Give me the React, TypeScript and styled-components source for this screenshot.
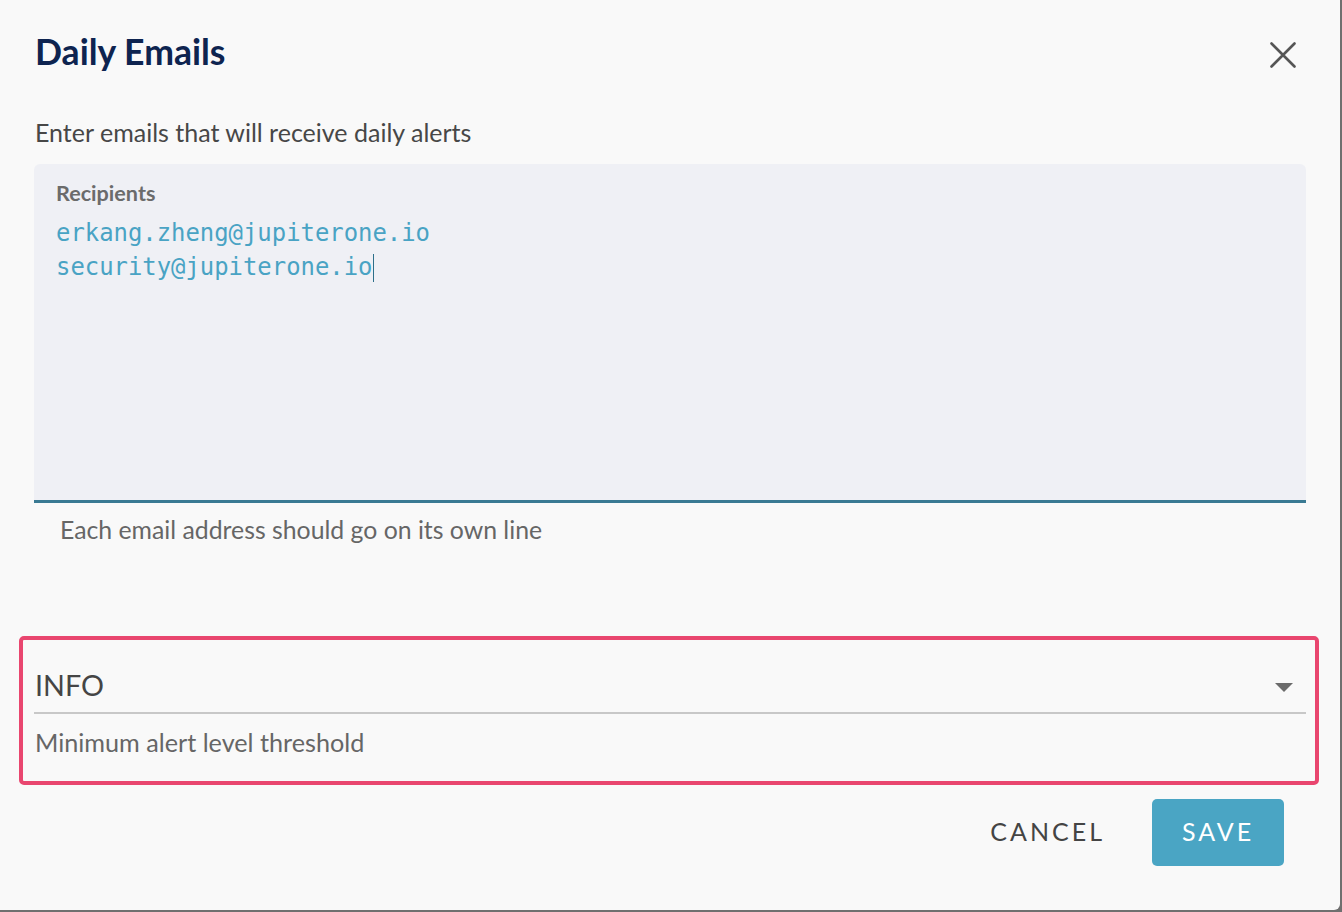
import React from "react";
import styled, { createGlobalStyle } from "styled-components";

const Global = createGlobalStyle`
  html, body { margin: 0; padding: 0; }
  body {
    background: #6f6f6f;
    font-family: Lato, "Noto Sans", sans-serif;
    width: 1342px;
    height: 912px;
    overflow: hidden;
  }
`;

const Dialog = styled.div`
  width: 1340px;
  height: 910px;
  background: #f9f9f9;
  border-radius: 0 0 6px 0;
  box-sizing: border-box;
  display: flex;
  flex-direction: column;
  padding: 0 34px 0 34px;
`;

const Header = styled.div`
  display: flex;
  align-items: center;
  justify-content: space-between;
  height: 104px;
`;

const Title = styled.h1`
  margin: 0;
  font-family: Lato, sans-serif;
  font-weight: 700;
  font-size: 35.6px;
  line-height: 44px;
  color: #0e2450;
  padding-left: 1px;
`;

const CloseButton = styled.button`
  border: none;
  background: transparent;
  padding: 0;
  width: 28px;
  height: 28px;
  display: flex;
  align-items: center;
  justify-content: center;
  cursor: pointer;
  margin: 5px 9px 0 0;
`;

const Subtitle = styled.p`
  margin: 13px 0 17px 1px;
  font-size: 25px;
  line-height: 30px;
  color: #474747;
`;

const FilledField = styled.div`
  background: #eff0f5;
  border-radius: 6px 6px 0 0;
  border-bottom: 3px solid #3a7a93;
  height: 339px;
  box-sizing: border-box;
  padding: 16px 22px;
  display: flex;
  flex-direction: column;
`;

const FieldLabel = styled.label`
  font-size: 21.6px;
  font-weight: 700;
  color: #6b6b6b;
  line-height: 26px;
`;

const Emails = styled.div`
  margin-top: 10px;
  font-family: "DejaVu Sans Mono", "Liberation Mono", monospace;
  font-size: 23.9px;
  line-height: 34px;
  color: #49a3c4;
`;

const Caret = styled.span`
  display: inline-block;
  width: 1px;
  height: 28px;
  background: #2d6f8a;
  vertical-align: middle;
  margin-left: 1px;
`;

const Helper = styled.div`
  font-size: 25px;
  color: #666;
  line-height: 30px;
`;

const FieldHelper = styled(Helper)`
  margin-top: 12px;
  padding-left: 26px;
  font-size: 24.8px;
`;

const HighlightBox = styled.div`
  margin: 91px -13px 0 -15px;
  border: 4px solid #e9466f;
  border-radius: 5px;
  height: 149px;
  box-sizing: border-box;
  padding: 28px 9px 0 11px;
  display: flex;
  flex-direction: column;
`;

const SelectRow = styled.div`
  display: flex;
  align-items: flex-start;
  justify-content: space-between;
  height: 44px;
  border-bottom: 2px solid #c8c8c8;
  padding-left: 1px;
`;

const SelectValue = styled.span`
  font-size: 28.7px;
  color: #454545;
  line-height: 34px;
`;

const Arrow = styled.span`
  width: 0;
  height: 0;
  border-left: 9px solid transparent;
  border-right: 9px solid transparent;
  border-top: 9px solid #6b6b6b;
  margin-right: 13px;
  margin-top: 15px;
`;

const SelectHelper = styled(Helper)`
  margin-top: 13px;
  padding-left: 1px;
  font-size: 25.2px;
`;

const Actions = styled.div`
  display: flex;
  justify-content: flex-end;
  align-items: center;
  gap: 31px;
  margin-top: 14px;
  margin-right: 22px;
`;

const Button = styled.button<{ $primary?: boolean }>`
  font-family: Lato, sans-serif;
  font-size: 25px;
  letter-spacing: 3px;
  border: none;
  border-radius: 5px;
  height: 67px;
  width: ${(p) => (p.$primary ? "132px" : "auto")};
  padding: 0 ${(p) => (p.$primary ? "0" : "16px")} 4px;
  padding-left: ${(p) => (p.$primary ? "0" : "16px")};
  background: ${(p) => (p.$primary ? "#4aa5c4" : "transparent")};
  color: ${(p) => (p.$primary ? "#fff" : "#444")};
  cursor: pointer;
`;

export default function App() {
  return (
    <>
      <Global />
      <Dialog>
        <Header>
          <Title>Daily Emails</Title>
          <CloseButton aria-label="Close">
            <svg width="26" height="26" viewBox="0 0 26 26">
              <path
                d="M1.5 1.5 L24.5 24.5 M24.5 1.5 L1.5 24.5"
                stroke="#555"
                strokeWidth="2.6"
                strokeLinecap="round"
              />
            </svg>
          </CloseButton>
        </Header>
        <Subtitle>Enter emails that will receive daily alerts</Subtitle>
        <FilledField>
          <FieldLabel>Recipients</FieldLabel>
          <Emails>
            erkang.zheng@jupiterone.io
            <br />
            security@jupiterone.io
            <Caret />
          </Emails>
        </FilledField>
        <FieldHelper>Each email address should go on its own line</FieldHelper>
        <HighlightBox>
          <SelectRow>
            <SelectValue>INFO</SelectValue>
            <Arrow />
          </SelectRow>
          <SelectHelper>Minimum alert level threshold</SelectHelper>
        </HighlightBox>
        <Actions>
          <Button>CANCEL</Button>
          <Button $primary>SAVE</Button>
        </Actions>
      </Dialog>
    </>
  );
}
